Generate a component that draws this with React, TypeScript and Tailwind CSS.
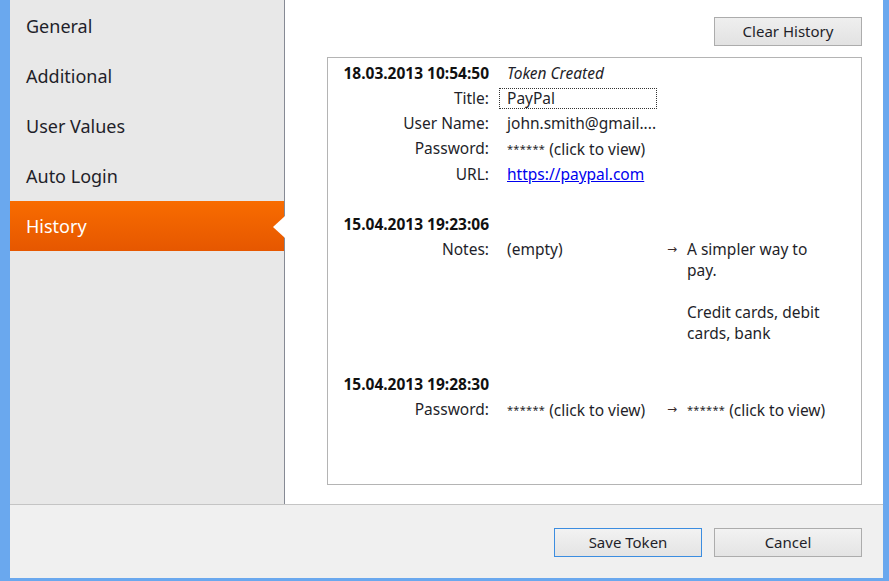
import { FC } from "react";

const menu = ["General", "Additional", "User Values", "Auto Login", "History"];

const Stars: FC = () => <span className="text-[11px] tracking-[0.3px] align-[2px]">******</span>;

const Row: FC<{ label: string; children?: React.ReactNode; next?: React.ReactNode; bold?: boolean }> = ({
  label,
  children,
  next,
  bold,
}) => (
  <div className="flex items-start">
    <div className={`w-[147px] shrink-0 text-right leading-[25px] whitespace-nowrap ${bold ? "font-bold text-[#111]" : ""}`}>
      {label}
    </div>
    <div className="w-[168px] shrink-0 pl-[18px] leading-[25px] whitespace-nowrap overflow-hidden">{children}</div>
    {next !== undefined && (
      <>
        <div
          className="w-[30px] shrink-0 text-center leading-[25px] text-[12px] text-[#3a2a2a]"
          style={{ fontFamily: '"DejaVu Sans", sans-serif' }}
        >
          →
        </div>
        <div className="w-[140px] shrink-0 pt-[2px] pb-[3px] leading-[21px]">{next}</div>
      </>
    )}
  </div>
);

export default function App() {
  return (
    <div
      className="w-[889px] h-[581px] bg-[#6aa8ee] pl-[10px] pr-[6px] pb-[3px] flex flex-col text-[#1f1f2a] overflow-hidden"
      style={{ fontFamily: '"Noto Sans", "Open Sans", sans-serif' }}
    >
      <div className="flex h-[504px]">
        {/* sidebar */}
        <div className="w-[275px] shrink-0 bg-[#e8e8e8] border-r border-[#868a94] pt-[1px] relative">
          {menu.map((m) =>
            m === "History" ? (
              <div
                key={m}
                className="relative h-[50px] flex items-center pl-4 text-[18px] text-white bg-gradient-to-b from-[#f86c00] to-[#e65700]"
              >
                {m}
                <div className="absolute right-[-1px] top-[15px] w-0 h-0 border-y-[11px] border-y-transparent border-r-[12px] border-r-white" />
              </div>
            ) : (
              <div key={m} className="h-[50px] flex items-center pl-4 text-[18px]">
                {m}
              </div>
            )
          )}
        </div>
        {/* content */}
        <div className="flex-1 bg-white flex flex-col pl-[42px] pr-[21px] pt-[17px]">
          <div className="flex justify-end">
            <button className="w-[148px] h-[29px] border border-[#acacac] bg-gradient-to-b from-[#efefef] to-[#e2e2e2] text-[15px]">
              Clear History
            </button>
          </div>
          <div className="mt-[11px] h-[428px] border border-[#b4b4b4] pt-[3px] pl-[14px] text-[15.5px]">
            <div className="mb-[25px]">
              <Row label="18.03.2013 10:54:50" bold>
                <span className="italic">Token Created</span>
              </Row>
              <Row label="Title:">
                <span className="inline-block w-[158px] -ml-2 pl-2 leading-[21px] outline-1 outline-dotted outline-[#333] -outline-offset-1">
                  PayPal
                </span>
              </Row>
              <Row label="User Name:">john.smith@gmail....</Row>
              <Row label="Password:">
                <Stars /> (click to view)
              </Row>
              <Row label="URL:">
                <span className="text-[#0000ee] underline">https://paypal.com</span>
              </Row>
            </div>
            <div className="mb-[25px]">
              <Row label="15.04.2013 19:23:06" bold />
              <Row
                label="Notes:"
                next={
                  <>
                    A simpler way to pay.
                    <br />
                    <br />
                    Credit cards, debit cards, bank
                  </>
                }
              >
                (empty)
              </Row>
            </div>
            <div>
              <Row label="15.04.2013 19:28:30" bold />
              <Row
                label="Password:"
                next={
                  <span className="whitespace-nowrap">
                    <Stars /> (click to view)
                  </span>
                }
              >
                <Stars /> (click to view)
              </Row>
            </div>
          </div>
        </div>
      </div>
      {/* footer */}
      <div className="flex-1 bg-[#f0f0f0] border-t border-[#c4c4c4] flex justify-end items-start pt-[23px] pr-[21px] gap-[12px]">
        <button className="w-[148px] h-[29px] border border-[#3c8de0] bg-gradient-to-b from-[#f2f2f2] to-[#e4e4e4] text-[15px]">
          Save Token
        </button>
        <button className="w-[148px] h-[29px] border border-[#acacac] bg-gradient-to-b from-[#f2f2f2] to-[#e4e4e4] text-[15px]">
          Cancel
        </button>
      </div>
    </div>
  );
}
